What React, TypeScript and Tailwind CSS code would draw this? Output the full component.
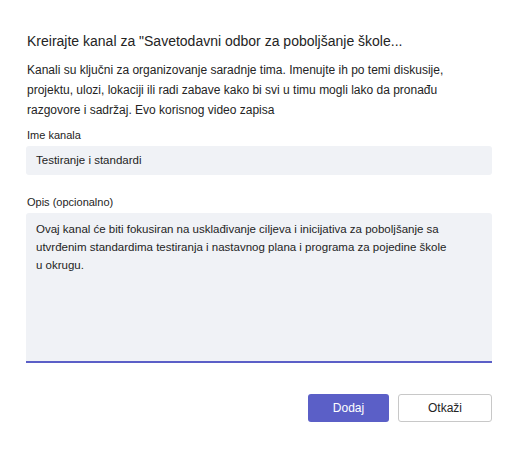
import React from "react";

export default function App() {
  return (
    <div
      className="w-[520px] h-[449px] bg-white text-[#242424] px-[27px] pt-[31px]"
      style={{ fontFamily: '"Liberation Sans", Arial, sans-serif' }}
    >
      <h1 className="text-[14px] leading-[20px] font-normal whitespace-nowrap">
        Kreirajte kanal za "Savetodavni odbor za poboljšanje škole...
      </h1>
      <p className="mt-[9px] text-[12px] leading-[20px] whitespace-nowrap">
        Kanali su ključni za organizovanje saradnje tima. Imenujte ih po temi diskusije,
        <br />
        projektu, ulozi, lokaciji ili radi zabave kako bi svi u timu mogli lako da pronađu
        <br />
        razgovore i sadržaj. Evo korisnog video zapisa
      </p>
      <div className="mt-[7px] text-[11px] leading-[16px]">Ime kanala</div>
      <div className="mt-[3px] -ml-px w-[466px] h-[29px] rounded-[3px] bg-[#f0f2f6] px-[10px] flex items-center text-[11.5px]">
        Testiranje i standardi
      </div>
      <div className="mt-[19px] text-[11px] leading-[16px]">Opis (opcionalno)</div>
      <div className="mt-[3px] -ml-px w-[466px] h-[150px] rounded-t-[3px] bg-[#f0f2f6] border-b-2 border-[#5b5fc7] px-[10px] pt-[7px] text-[11.5px] leading-[18px] whitespace-nowrap">
        Ovaj kanal će biti fokusiran na usklađivanje ciljeva i inicijativa za poboljšanje sa
        <br />
        utvrđenim standardima testiranja i nastavnog plana i programa za pojedine škole
        <br />
        u okrugu.
      </div>
      <div className="mt-[31px] w-[466px] -ml-px flex justify-end gap-[9px]">
        <button className="w-[81px] h-[28px] rounded-[3px] bg-[#5b5fc7] text-white text-[12px]">
          Dodaj
        </button>
        <button className="w-[94px] h-[28px] rounded-[3px] bg-white border border-[#c8c8c8] text-[12px]">
          Otkaži
        </button>
      </div>
    </div>
  );
}
